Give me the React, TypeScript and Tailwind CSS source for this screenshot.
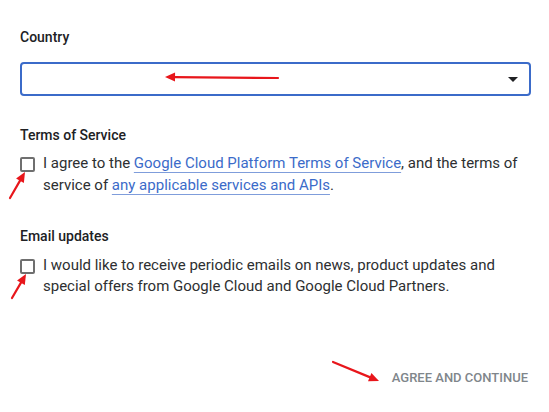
import React from 'react';

const Arrow: React.FC<{ x1: number; y1: number; x2: number; y2: number }> = ({ x1, y1, x2, y2 }) => {
  const a = Math.atan2(y2 - y1, x2 - x1);
  const len = 11;
  const w = 0.42;
  const p1 = [x2 - len * Math.cos(a - w), y2 - len * Math.sin(a - w)];
  const p2 = [x2 - len * Math.cos(a + w), y2 - len * Math.sin(a + w)];
  const bx = x2 - len * 0.8 * Math.cos(a);
  const by = y2 - len * 0.8 * Math.sin(a);
  return (
    <g>
      <line x1={x1} y1={y1} x2={bx} y2={by} stroke="#e8161b" strokeWidth={2.2} strokeLinecap="round" />
      <polygon points={`${x2},${y2} ${p1[0]},${p1[1]} ${p2[0]},${p2[1]}`} fill="#e8161b" />
    </g>
  );
};

const Checkbox = () => (
  <span className="mt-[4px] h-[15px] w-[15px] shrink-0 rounded-[2px] border-2 border-[#6f6f6f] bg-white" />
);

const Link: React.FC<{ children: React.ReactNode }> = ({ children }) => (
  <a className="text-[#3b6bc9] underline decoration-[#7f9ddb] decoration-1 underline-offset-[4px]">{children}</a>
);

export default function App() {
  return (
    <div className="relative min-h-[412px] w-[549px] bg-white font-['Roboto',sans-serif] text-[14px] text-[#202124]">
      <div className="flex flex-col px-5 pt-[27px]">
        {/* Country */}
        <div className="font-medium leading-[20px]">Country</div>
        <div className="mt-[15px] flex h-[34px] w-[511px] items-center justify-end rounded-[4px] border-2 border-[#3b6bc9] pr-[11px]">
          <svg width="10" height="5" viewBox="0 0 10 5">
            <path d="M0 0h10L5 5z" fill="#202124" />
          </svg>
        </div>

        {/* Terms */}
        <div className="mt-[29px] font-medium leading-[20px]">Terms of Service</div>
        <div className="mt-[8px] flex gap-[8px] text-[15px] leading-[21.5px] text-[#2d2f31]">
          <Checkbox />
          <p>
            I agree to the <Link>Google Cloud Platform Terms of Service</Link>, and the terms of service of{' '}
            <Link>any applicable services and APIs</Link>.
          </p>
        </div>

        {/* Email */}
        <div className="mt-[30px] font-medium leading-[20px]">Email updates</div>
        <div className="mt-[9px] flex gap-[8px] text-[15px] leading-[21px] text-[#2d2f31]">
          <Checkbox />
          <p>
            I would like to receive periodic emails on news, product updates and special offers from Google Cloud
            and Google Cloud Partners.
          </p>
        </div>

        <div className="mt-[71px] flex justify-end pr-[1px]">
          <button className="text-[13px] font-medium uppercase leading-[20px] text-[#80868b]">
            Agree and continue
          </button>
        </div>
      </div>

      {/* annotation arrows */}
      <svg className="pointer-events-none absolute left-0 top-0" width="549" height="412">
        <Arrow x1={278} y1={78} x2={165} y2={77} />
        <Arrow x1={10} y1={198} x2={25} y2={172} />
        <Arrow x1={12} y1={298} x2={26} y2={274} />
        <Arrow x1={333} y1={362} x2={379} y2={381} />
      </svg>
    </div>
  );
}
